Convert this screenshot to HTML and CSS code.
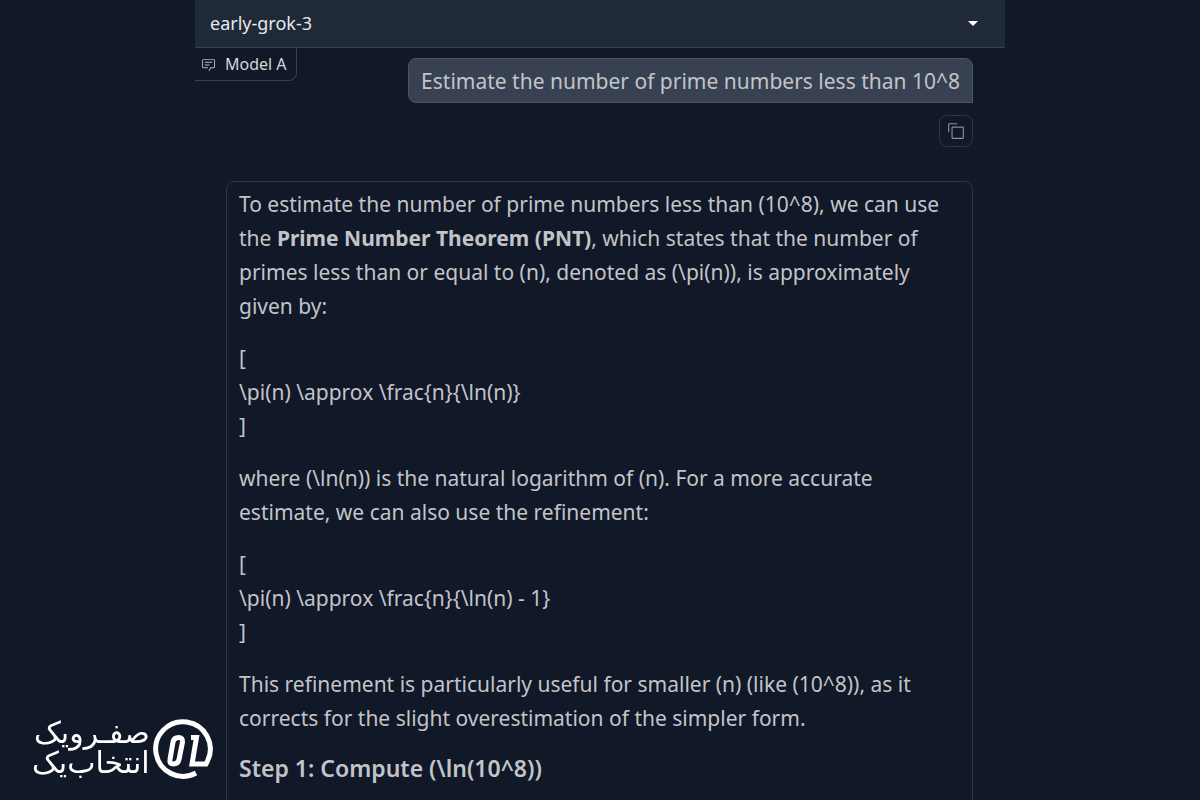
FILE: index.html
```html
<!DOCTYPE html>
<html lang="en">
<head>
  <meta charset="UTF-8">
  <title>early-grok-3</title>
  <link rel="stylesheet" href="styles.css">
</head>
<body>
  <main class="panel">
    <div class="model-picker">
      <select class="model-select" aria-label="Model">
        <option>early-grok-3</option>
      </select>
      <svg class="arrow" viewBox="0 0 10 5" aria-hidden="true"><path d="M0 0h10L5 5z"/></svg>
    </div>

    <section class="chat">
      <div class="chat-label">
        <svg class="chat-icon" viewBox="0 0 32 32" aria-hidden="true">
          <path d="M17.74 30L16 29l4-7h6a2 2 0 0 0 2-2V8a2 2 0 0 0-2-2H6a2 2 0 0 0-2 2v12a2 2 0 0 0 2 2h9v2H6a4 4 0 0 1-4-4V8a4 4 0 0 1 4-4h20a4 4 0 0 1 4 4v12a4 4 0 0 1-4 4h-4.84z"/>
          <path d="M8 10h16v2H8zM8 16h10v2H8z"/>
        </svg>
        Model A
      </div>

      <div class="messages">
        <div class="message user">
          <p>Estimate the number of prime numbers less than 10^8</p>
        </div>
        <button class="copy" type="button" aria-label="Copy message">
          <svg class="copy-icon" viewBox="0 0 32 32" aria-hidden="true">
            <path d="M28 10v18H10V10h18m0-2H10a2 2 0 0 0-2 2v18a2 2 0 0 0 2 2h18a2 2 0 0 0 2-2V10a2 2 0 0 0-2-2z"/>
            <path d="M4 18H2V4a2 2 0 0 1 2-2h14v2H4z"/>
          </svg>
        </button>

        <div class="message bot">
          <p>To estimate the number of prime numbers less than (10^8), we can use the <strong>Prime Number Theorem (PNT)</strong>, which states that the number of primes less than or equal to (n), denoted as (\pi(n)), is approximately given by:</p>
          <p>[<br>\pi(n) \approx \frac{n}{\ln(n)}<br>]</p>
          <p>where (\ln(n)) is the natural logarithm of (n). For a more accurate estimate, we can also use the refinement:</p>
          <p>[<br>\pi(n) \approx \frac{n}{\ln(n) - 1}<br>]</p>
          <p>This refinement is particularly useful for smaller (n) (like (10^8)), as it corrects for the slight overestimation of the simpler form.</p>
          <h3>Step 1: Compute (\ln(10^8))</h3>
        </div>
      </div>
    </section>
  </main>

  <div class="watermark">
    <div class="watermark-text" lang="fa" dir="rtl">
      <span>صفـرویک</span>
      <span>انتخاب‌یک</span>
    </div>
    <svg class="watermark-logo" viewBox="0 0 60 62" aria-hidden="true">
      <path class="ring" d="M43 55A27.300 27.300 0 1 1 54.500 43L53 46H39L43.500 19.500H38"/>
      <path class="zero" d="M20 24Q21 19.500 25.500 19.500T29.500 24L26 41.500Q25 46 20.500 46T17 41.500Z"/>
    </svg>
  </div>
</body>
</html>
```
FILE: styles.css
```css
* {
  box-sizing: border-box;
}

body {
  margin: 0;
  height: 100vh;
  overflow: hidden;
  background: #111827;
  color: #c2c4c9;
  font-family: "Noto Sans", sans-serif;
  font-size: 21px;
  line-height: 34px;
}

.panel {
  max-width: 810px;
  margin: 0 auto;
}

.model-picker {
  position: relative;
  background: #1f2937;
  border-bottom: 1px solid #374151;
}

.model-select {
  display: block;
  width: 100%;
  height: 47px;
  padding: 0 15px 2px;
  border: none;
  background: transparent;
  color: #e8eaed;
  font-family: inherit;
  font-size: 18px;
  appearance: none;
}

.arrow {
  position: absolute;
  top: 21px;
  right: 27px;
  width: 10px;
  height: 5px;
  fill: #fff;
}

.chat {
  position: relative;
}

.chat-label {
  position: absolute;
  top: 0;
  left: 0;
  display: flex;
  align-items: center;
  gap: 9px;
  height: 33px;
  padding: 0 9px 0 6px;
  border: 1px solid #374151;
  border-width: 0 1px 1px 0;
  border-bottom-right-radius: 8px;
  color: #d5d7db;
  font-size: 16px;
}

.chat-icon {
  width: 15px;
  height: 15px;
  fill: #b4b9c2;
}

.messages {
  display: flex;
  flex-direction: column;
  padding: 10px 32px 0 31px;
}

.message {
  padding: 5px 12px;
  border: 1px solid #2c3644;
  border-radius: 8px;
}

.message p {
  margin: 0 0 18px;
}

.message p:last-child {
  margin-bottom: 0;
}

.message h3 {
  margin: 0;
  font-size: 23px;
  font-weight: 600;
  line-height: 30px;
}

.user {
  align-self: flex-end;
  padding-bottom: 4px;
  background: #374151;
  border-color: #4b5563;
  border-bottom-right-radius: 0;
}

.bot {
  padding-bottom: 60px;
}

.copy {
  align-self: flex-end;
  display: flex;
  align-items: center;
  justify-content: center;
  width: 34px;
  height: 32px;
  margin: 12px 0 34px;
  padding: 0;
  border: 1px solid #2c3644;
  border-radius: 8px;
  background: transparent;
}

.copy-icon {
  width: 18px;
  height: 18px;
  fill: #8b909b;
}

.watermark {
  position: fixed;
  left: 32px;
  bottom: 20px;
  display: flex;
  align-items: flex-start;
  gap: 3px;
  color: #fff;
}

.watermark-text {
  display: flex;
  flex-direction: column;
  font-family: "DejaVu Sans", sans-serif;
  font-size: 30px;
  line-height: 30px;
}

.watermark-logo {
  width: 60px;
  height: 62px;
  fill: none;
  stroke: #fff;
}

.ring {
  stroke-width: 5;
}

.zero {
  stroke-width: 5;
}
```
